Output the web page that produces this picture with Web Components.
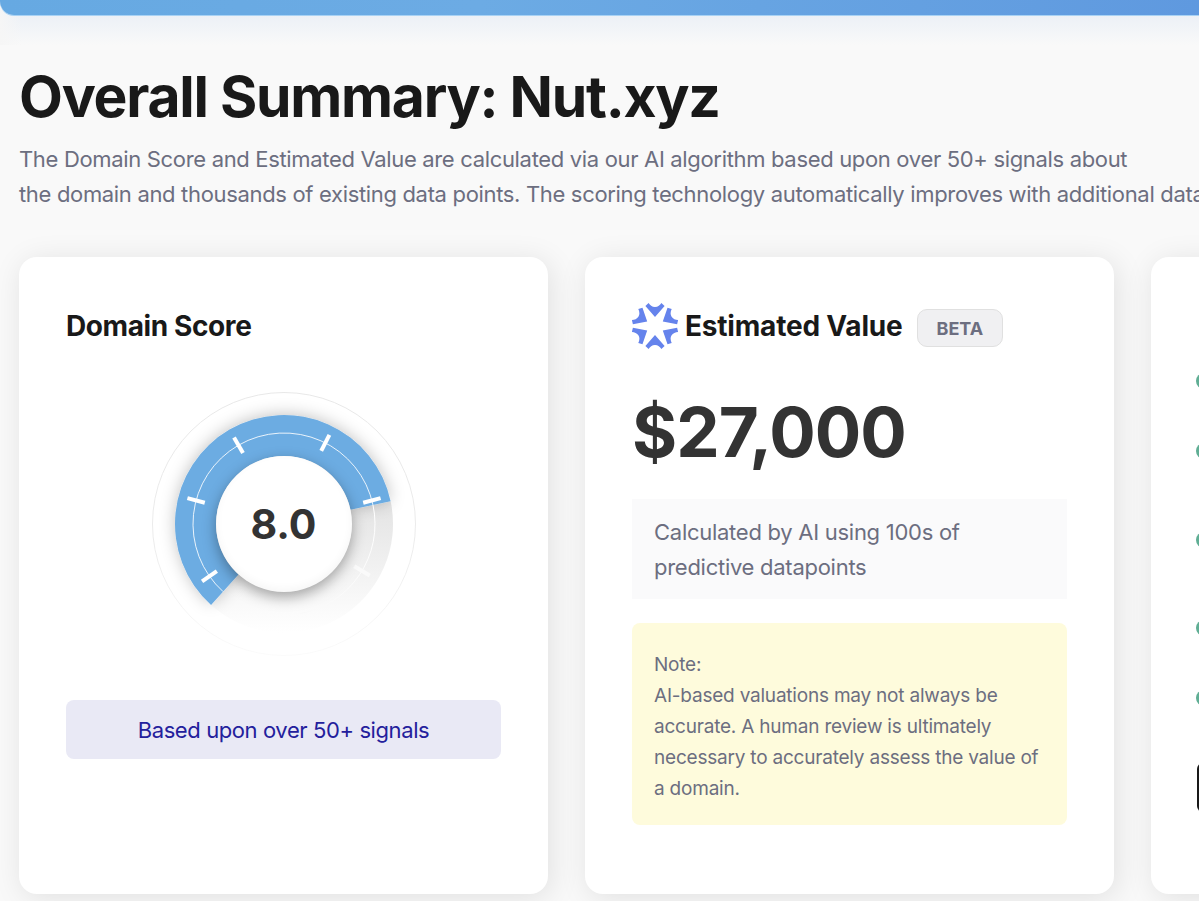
<!DOCTYPE html>
<html>
<head>
<meta charset="utf-8">
<title>Overall Summary</title>
<style>
  html, body { margin: 0; height: 100%; overflow: hidden; }
  body { background: #f9f9f9; font-family: "Inter", "Noto Sans", sans-serif; }
</style>
</head>
<body>
<top-bar></top-bar>
<summary-page>
  <span slot="title">Overall Summary: Nut.xyz</span>
  <span slot="intro">The Domain Score and Estimated Value are calculated via our AI algorithm based upon over 50+ signals about<br>the domain and thousands of existing data points. The scoring technology automatically improves with additional data.</span>
  <summary-card>
    <card-title>Domain Score</card-title>
    <score-gauge value="8.0"></score-gauge>
    <signal-note>Based upon over 50+ signals</signal-note>
  </summary-card>
  <summary-card>
    <value-panel amount="$27,000"></value-panel>
  </summary-card>
  <summary-card>
    <check-list></check-list>
  </summary-card>
</summary-page>

<script>
class TopBar extends HTMLElement {
  constructor () {
    super();
    this.attachShadow({ mode: 'open' }).innerHTML = `
      <style>
        :host {
          display: block;
          height: 45px;
          background:
            linear-gradient(90deg, #f6f6f6, rgba(246, 246, 246, 0) 22px),
            linear-gradient(#e5ecf5, #f9f9f9);
        }
        .bar {
          height: 15px;
          background: linear-gradient(90deg, #66a9e2, #6cabe4 40%, #5f99df);
          border-bottom-left-radius: 14px;
          box-shadow: 0 1px 0 #a8d2f4;
        }
      </style>
      <div class="bar"></div>`;
  }
}
customElements.define('top-bar', TopBar);

class SummaryPage extends HTMLElement {
  constructor () {
    super();
    this.attachShadow({ mode: 'open' }).innerHTML = `
      <style>
        :host { display: block; padding: 17px 0 0 19px; }
        h1 {
          margin: 0;
          font-size: 57px;
          line-height: 70px;
          font-weight: 700;
          letter-spacing: -1.25px;
          color: #191919;
          white-space: nowrap;
        }
        p {
          margin: 10px 0 0;
          font-size: 22px;
          line-height: 35px;
          letter-spacing: -.33px;
          color: #6c6e80;
          white-space: nowrap;
        }
        .cards {
          display: grid;
          grid-template-columns: repeat(3, 529px);
          gap: 37px;
          margin-top: 45px;
        }
      </style>
      <h1><slot name="title"></slot></h1>
      <p><slot name="intro"></slot></p>
      <div class="cards"><slot></slot></div>`;
  }
}
customElements.define('summary-page', SummaryPage);

class SummaryCard extends HTMLElement {
  constructor () {
    super();
    this.attachShadow({ mode: 'open' }).innerHTML = `
      <style>
        :host {
          display: block;
          box-sizing: border-box;
          height: 637px;
          padding: 47px 47px 0;
          background: #fff;
          border-radius: 18px;
          box-shadow: 3px 4px 30px rgba(0, 0, 0, .1);
        }
      </style>
      <slot></slot>`;
  }
}
customElements.define('summary-card', SummaryCard);

class CardTitle extends HTMLElement {
  constructor () {
    super();
    this.attachShadow({ mode: 'open' }).innerHTML = `
      <style>
        :host {
          display: block;
          font-size: 28px;
          line-height: 44px;
          font-weight: 700;
          letter-spacing: -.4px;
          color: #191919;
        }
      </style>
      <slot></slot>`;
  }
}
customElements.define('card-title', CardTitle);

// angles are clockwise from 12 o'clock, centre of the svg is 132,132
const polar = (r, a) => {
  const t = a * Math.PI / 180;
  return [132 + r * Math.sin(t), 132 - r * Math.cos(t)].map(n => n.toFixed(2)).join(' ');
};
const ringSlice = (from, to, r1, r2) => {
  const big = to - from > 180 ? 1 : 0;
  return `M${polar(r2, from)} A${r2} ${r2} 0 ${big} 1 ${polar(r2, to)} L${polar(r1, to)} A${r1} ${r1} 0 ${big} 0 ${polar(r1, from)}Z`;
};

class ScoreGauge extends HTMLElement {
  constructor () {
    super();
    const ticks = [-125, -75, -30, 27, 75];
    const tick = (a, colour) => `<path d="M${polar(82, a)} L${polar(100, a)}" stroke="${colour}" stroke-width="4"/>`;
    this.attachShadow({ mode: 'open' }).innerHTML = `
      <style>
        :host { display: grid; justify-content: center; margin-top: 44px; }
        .dial { display: grid; place-items: center; width: 264px; height: 264px; }
        .dial > * { grid-area: 1 / 1; }
        svg { display: block; }
        .knob {
          display: grid;
          place-items: center;
          width: 136px;
          height: 136px;
          border-radius: 50%;
          background: #fff;
          box-shadow: 0 5px 14px rgba(0, 0, 0, .34), inset 0 -3px 8px rgba(0, 0, 0, .04);
          font-size: 41px;
          font-weight: 700;
          color: #333;
        }
      </style>
      <div class="dial">
        <svg width="264" height="264" viewBox="0 0 264 264" fill="none">
          <defs>
            <linearGradient id="rest" x1="0" y1="0" x2="0" y2="1">
              <stop offset="0" stop-color="#e3e3e3"/>
              <stop offset=".5" stop-color="#f1f1f1"/>
              <stop offset=".8" stop-color="#fafafa"/>
              <stop offset="1" stop-color="#fff"/>
            </linearGradient>
            <linearGradient id="edge" gradientUnits="userSpaceOnUse" x1="0" y1="110" x2="0" y2="235">
              <stop offset="0" stop-color="#fff"/>
              <stop offset="1" stop-color="#f9f9f9"/>
            </linearGradient>
            <linearGradient id="rim" gradientUnits="userSpaceOnUse" x1="0" y1="0" x2="0" y2="264">
              <stop offset="0" stop-color="#e8e8e8"/>
              <stop offset=".55" stop-color="#ebebeb"/>
              <stop offset="1" stop-color="#fbfbfb"/>
            </linearGradient>
            <filter id="soft" x="-20%" y="-20%" width="140%" height="140%">
              <feDropShadow dx="0" dy="-1" stdDeviation="8" flood-color="#000" flood-opacity=".24"/>
            </filter>
          </defs>
          <circle cx="132" cy="132" r="131.5" stroke="url(#rim)" stroke-width="1"/>
          <path d="${ringSlice(78, 222, 68, 109)}" fill="url(#rest)"/>
          <path d="${ringSlice(-138, 78, 68, 109)}" fill="#6cace2" filter="url(#soft)"/>
          <path d="M${polar(91, 78)} A91 91 0 0 1 ${polar(91, 170)}" stroke="url(#edge)" stroke-width="1"/>
          <path d="M${polar(91, -138)} A91 91 0 1 1 ${polar(91, 78)}" stroke="#fff" stroke-width="1" opacity=".85"/>
          ${ticks.map(a => tick(a, '#fff')).join('')}
          ${tick(121, '#fafafa')}
        </svg>
        <div class="knob">${this.getAttribute('value')}</div>
      </div>`;
  }
}
customElements.define('score-gauge', ScoreGauge);

class SignalNote extends HTMLElement {
  constructor () {
    super();
    this.attachShadow({ mode: 'open' }).innerHTML = `
      <style>
        :host {
          display: block;
          margin-top: 44px;
          padding: 14px 0 12px;
          background: #e9e9f5;
          border-radius: 8px;
          text-align: center;
          font-size: 22px;
          line-height: 33px;
          letter-spacing: -.4px;
          color: #23209c;
        }
      </style>
      <slot></slot>`;
  }
}
customElements.define('signal-note', SignalNote);

class ValuePanel extends HTMLElement {
  constructor () {
    super();
    const petal = `<path d="M0 -9 L9.6 -20 L6.4 -23 C5 -21 3 -19 0 -19 C-3 -19 -5 -21 -6.4 -23 L-9.6 -20Z"/>`;
    this.attachShadow({ mode: 'open' }).innerHTML = `
      <style>
        :host { display: block; }
        .head { display: flex; align-items: center; height: 44px; }
        svg { display: block; flex: none; margin-right: 7px; }
        h2 {
          margin: 0;
          font-size: 28px;
          font-weight: 700;
          letter-spacing: -.2px;
          color: #191919;
        }
        .beta {
          margin: 3px 0 0 14px;
          padding: 0 19px;
          height: 36px;
          line-height: 38px;
          background: #f0f0f2;
          border: 1px solid #e0e0e0;
          border-radius: 10px;
          font-size: 18px;
          font-weight: 700;
          color: #6c6e80;
        }
        .amount {
          margin-top: 44px;
          font-size: 69px;
          line-height: 80px;
          font-weight: 700;
          letter-spacing: -1px;
          color: #333;
        }
        .info {
          margin-top: 27px;
          padding: 16px 22px 14px;
          background: #fafafb;
          font-size: 22px;
          line-height: 35px;
          letter-spacing: -.27px;
          color: #6c6e80;
        }
        .warn {
          margin-top: 24px;
          padding: 26px 22px 21px;
          background: #fefbdc;
          border-radius: 8px;
          font-size: 19px;
          line-height: 31px;
          letter-spacing: -.21px;
          color: #6c6e80;
          white-space: nowrap;
        }
      </style>
      <div class="head">
        <svg width="46" height="46" viewBox="-23 -23 46 46" fill="#6583ec">
          ${[0, 60, 120, 180, 240, 300].map(a => `<g transform="rotate(${a})">${petal}</g>`).join('')}
        </svg>
        <h2>Estimated Value</h2>
        <span class="beta">BETA</span>
      </div>
      <div class="amount">${this.getAttribute('amount')}</div>
      <div class="info">Calculated by AI using 100s of<br>predictive datapoints</div>
      <div class="warn">Note:<br>AI-based valuations may not always be<br>accurate. A human review is ultimately<br>necessary to accurately assess the value of<br>a domain.</div>`;
  }
}
customElements.define('value-panel', ValuePanel);

// only the left edge of this card is inside the window
class CheckList extends HTMLElement {
  constructor () {
    super();
    this.attachShadow({ mode: 'open' }).innerHTML = `
      <style>
        :host { display: block; margin-left: -2px; padding-top: 69px; }
        i { display: block; width: 16px; height: 16px; border-radius: 50%; background: #5fae94; }
        i + i { margin-top: 54px; }
        i.b + i { margin-top: 73px; }
        i.c + i { margin-top: 72px; }
        i.d + i { margin-top: 54px; }
        .btn { margin: 57px 0 0 1px; width: 200px; height: 49px; background: #191919; border-radius: 6px; }
      </style>
      <i></i><i class="b"></i><i class="c"></i><i class="d"></i><i></i>
      <div class="btn"></div>`;
  }
}
customElements.define('check-list', CheckList);
</script>
</body>
</html>
